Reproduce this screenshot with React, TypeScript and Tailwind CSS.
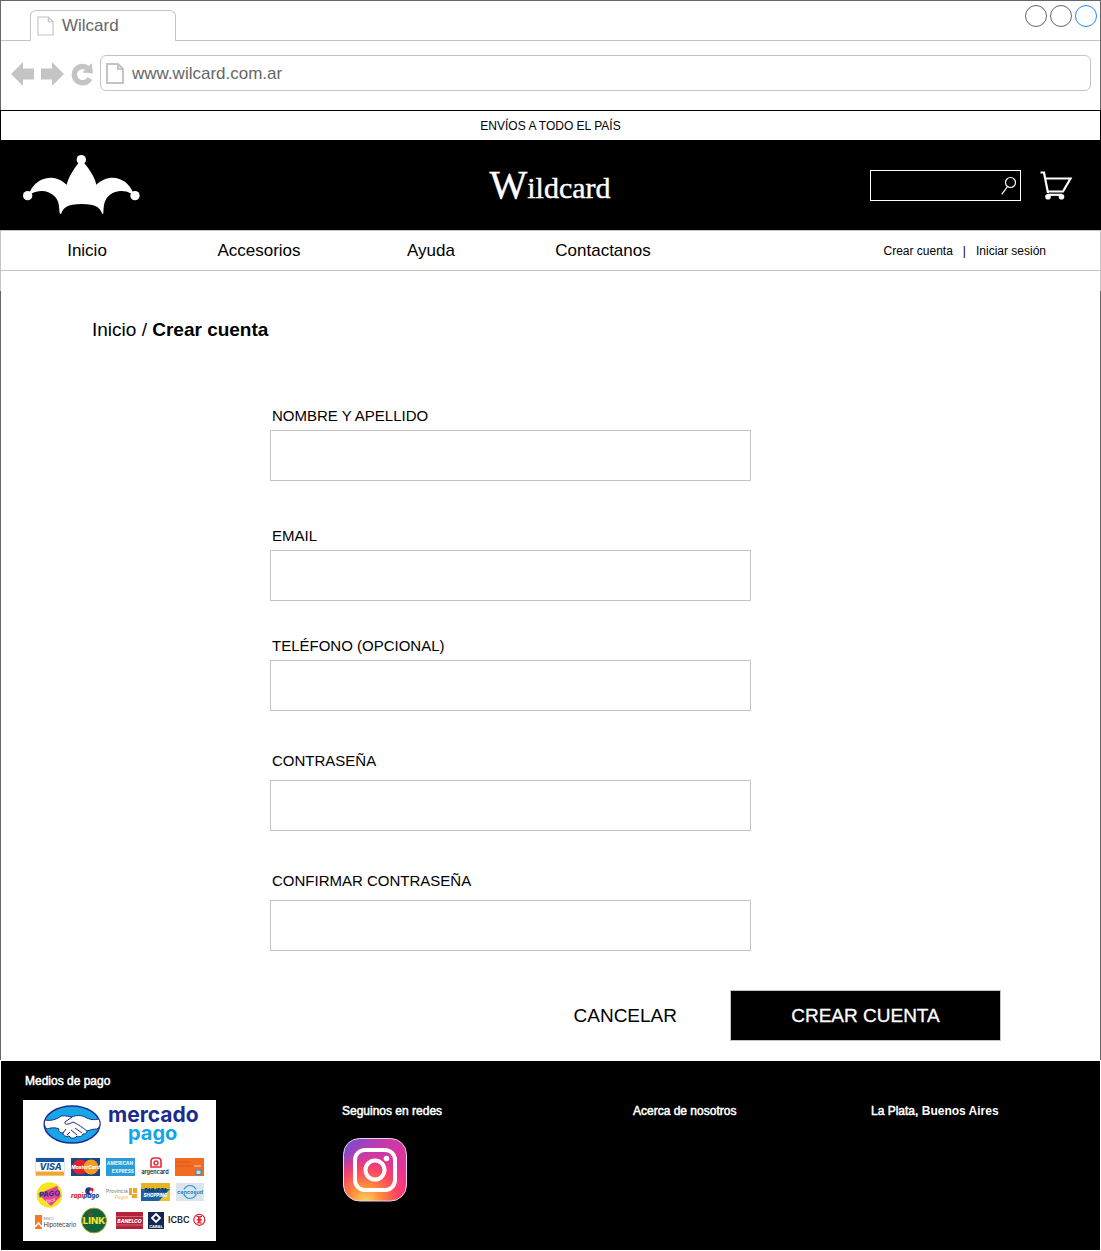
import React from "react";

function PageIcon({ className, stroke }: { className: string; stroke: number }) {
  return (
    <svg viewBox="0 0 18 21" className={className} fill="none" stroke="#c4c4c4" strokeWidth={stroke} aria-hidden="true">
      <path d="M1 1H12L17 6V20H1Z" />
      <path d="M12 1V6H17" />
    </svg>
  );
}

function BrowserChrome() {
  return (
    <div className="border-x border-t border-[#666]">
      <div className="flex h-10 items-stretch">
        <div className="w-[29px] shrink-0 border-b border-[#c4c4c4]" />
        <div className="mt-[9px] flex w-[146px] shrink-0 items-center gap-2 rounded-t-md border-x border-t border-[#c4c4c4] pl-1.5 text-[17px] leading-5 text-[#666]">
          <PageIcon className="h-5 w-[17px]" stroke={1.2} />
          <span>Wilcard</span>
        </div>
        <div className="flex flex-1 justify-end gap-[3px] border-b border-[#c4c4c4] pt-1 pr-[3px]">
          <button type="button" aria-label="Minimizar" className="size-[22px] rounded-full border border-[#666]" />
          <button type="button" aria-label="Maximizar" className="size-[22px] rounded-full border border-[#666]" />
          <button type="button" aria-label="Cerrar" className="size-[22px] rounded-full border border-[#1a8cff]" />
        </div>
      </div>
      <div className="flex h-[69px] items-start pt-3.5 pr-[9px] pl-2.5">
        <div className="flex h-[38px] w-[89px] shrink-0 items-center gap-[7px]">
          <button type="button" aria-label="Atrás">
            <svg viewBox="0 0 23 24" className="h-6 w-[23px]" fill="#c4c4c4"><path d="M0 12L12 0V6.500H23V17.500H12V24Z" /></svg>
          </button>
          <button type="button" aria-label="Adelante">
            <svg viewBox="0 0 23 24" className="h-6 w-[23px]" fill="#c4c4c4"><path d="M23 12L11 0V6.500H0V17.500H11V24Z" /></svg>
          </button>
          <button type="button" aria-label="Recargar">
            <svg viewBox="0 0 22 24" className="h-6 w-[22px]">
              <path d="M18.800 16.500A8.200 8.200 0 1 1 17 6.500" fill="none" stroke="#c4c4c4" strokeWidth="5.500" />
              <path d="M20.500 1L22 11.500L11.500 10.500Z" fill="#c4c4c4" />
            </svg>
          </button>
        </div>
        <label className="flex h-9 flex-1 items-center gap-2 rounded-md border border-[#c4c4c4] pl-[5px]">
          <PageIcon className="h-[21px] w-[18px]" stroke={2} />
          <input
            type="text"
            aria-label="Dirección"
            defaultValue="www.wilcard.com.ar"
            className="flex-1 bg-transparent pt-px text-[17px] leading-5 text-[#666] outline-none"
          />
        </label>
      </div>
    </div>
  );
}

function JesterLogo() {
  return (
    <svg viewBox="69 165 351 180" className="h-[60px] w-[117px]" fill="#fff" role="img" aria-label="Wildcard">
      <circle cx="244" cy="179" r="14" />
      <circle cx="83" cy="287" r="14" />
      <circle cx="405" cy="287" r="14" />
      <path d="M89 277C101 248 126 233 154 233C174 234 188 243 200 254C206 229 221 208 236 188H252C268 208 284 229 289 254C302 241 320 233 338 233C366 234 388 250 399 277L394 281C372 269 347 272 330 284C311 299 311 318 310 340L307 343C301 323 289 312 245 312C201 312 189 323 183 343L179 340C177 320 178 304 165 290C147 270 116 268 94 281Z" />
    </svg>
  );
}

function CartIcon() {
  return (
    <svg viewBox="0 0 33 29" className="h-[29px] w-[33px]" fill="none" stroke="#fff" aria-hidden="true">
      <path d="M0.500 1.500H4L8 22" strokeWidth="2.200" />
      <path d="M5 7.500H30.500L23 20.500H7.500" strokeWidth="2.200" />
      <path d="M8 23.800H22" strokeWidth="2.200" />
      <circle cx="8" cy="25.800" r="2.800" fill="#fff" stroke="none" />
      <circle cx="21.500" cy="25.800" r="2.800" fill="#fff" stroke="none" />
    </svg>
  );
}

function SiteHeader() {
  return (
    <header>
      <p className="flex h-[30px] items-center justify-center border-x border-t border-black text-xs">ENVÍOS A TODO EL PAÍS</p>
      <div className="grid h-[90px] grid-cols-[1fr_auto_1fr] items-center bg-black pr-7 pl-[23px] text-white">
        <a href="#inicio" className="justify-self-start"><JesterLogo /></a>
        <h1 className="pt-0.5 pl-1 font-['Liberation_Serif',serif] text-[30px] leading-10 [-webkit-text-stroke:0.4px_white]">
          <span className="text-[40px]">W</span>ildcard
        </h1>
        <div className="flex items-center gap-[19px] justify-self-end">
          <form role="search" onSubmit={(e) => e.preventDefault()} className="flex h-[31px] w-[151px] items-center border border-white pr-[3px]">
            <input type="search" aria-label="Buscar" className="min-w-0 flex-1 bg-transparent px-2 text-sm outline-none" />
            <button type="submit" aria-label="Buscar">
              <svg viewBox="0 0 16 19" className="h-[19px] w-4" fill="none" stroke="#fff" aria-hidden="true">
                <circle cx="9.500" cy="6.500" r="5" strokeWidth="1.200" />
                <path d="M6.500 10.500L0.800 18.300" strokeWidth="1.200" />
              </svg>
            </button>
          </form>
          <a href="#carrito" aria-label="Carrito"><CartIcon /></a>
        </div>
      </div>
      <nav className="grid h-[41px] grid-cols-[688fr_411fr] items-center border border-[#c4c4c4]">
        <div className="grid grid-cols-4 text-center text-[17px] leading-5">
          <a href="#inicio">Inicio</a>
          <a href="#accesorios">Accesorios</a>
          <a href="#ayuda">Ayuda</a>
          <a href="#contacto">Contactanos</a>
        </div>
        <div className="flex justify-end gap-[10px] pr-[54px] text-xs">
          <a href="#crear">Crear cuenta</a>
          <span>|</span>
          <a href="#sesion">Iniciar sesión</a>
        </div>
      </nav>
      <div className="h-5 border-x border-[#c4c4c4]" />
    </header>
  );
}

type FieldProps = { id: string; label: string; type: string; layout: string };

const fields: FieldProps[] = [
  { id: "nombre", label: "NOMBRE Y APELLIDO", type: "text", layout: "gap-1" },
  { id: "email", label: "EMAIL", type: "email", layout: "mt-[45px] gap-1" },
  { id: "telefono", label: "TELÉFONO (OPCIONAL)", type: "tel", layout: "mt-[35px] gap-1" },
  { id: "clave", label: "CONTRASEÑA", type: "password", layout: "mt-10 gap-[9px]" },
  { id: "confirmar", label: "CONFIRMAR CONTRASEÑA", type: "password", layout: "mt-10 gap-[9px]" },
];

function Field({ id, label, type, layout }: FieldProps) {
  return (
    <div className={`flex max-w-[481px] flex-col ${layout}`}>
      <label htmlFor={id} className="pl-0.5 text-[15px] leading-5">{label}</label>
      <input id={id} type={type} className="h-[51px] w-full border border-[#c4c4c4] px-3 text-[17px] outline-none" />
    </div>
  );
}

function AccountForm() {
  return (
    <main className="border-x border-[#666] pt-[27px] pb-[19px]">
      <p className="pl-[91px] text-[19px] leading-6">
        <a href="#inicio">Inicio</a> / <strong>Crear cuenta</strong>
      </p>
      <form onSubmit={(e) => e.preventDefault()} className="mt-16 mr-[99px] ml-[269px]">
        {fields.map((f) => (
          <Field key={f.id} {...f} />
        ))}
        <div className="mt-[39px] flex justify-end gap-[53px] text-[19px]">
          <button type="button" className="pt-0.5">CANCELAR</button>
          <button type="submit" className="h-[51px] w-[271px] border border-[#c4c4c4] bg-black pt-0.5 text-white [-webkit-text-stroke:0.3px_white]">CREAR CUENTA</button>
        </div>
      </form>
    </main>
  );
}

function PaymentMethods() {
  return (
    <svg viewBox="0 0 193 141" className="h-[141px] w-[193px] bg-white font-[Inter,sans-serif]" role="img" aria-label="Medios de pago aceptados">
      {/* Mercado Pago */}
      <ellipse cx="49" cy="24.500" rx="27.800" ry="18.400" fill="#19a6e6" stroke="#1b2c8a" strokeWidth="1.500" />
      <path d="M22 20C27 21 33 20 38 16C43 15 46 17 49 17C53 15 58 15 62 17C67 20 71 20 76 19C78 24 77 27 74 29C70 29 67 30 64 31C64 33 62 34 60 34C59 37 56 37 54 36C52 39 48 39 46 36C43 37 40 36 40 33C37 33 35 31 36 29C32 27 27 28 24 29C21 26 21 23 22 20Z" fill="#fff" stroke="#1b2c8a" strokeWidth="1" />
      <path d="M49 17L42 22C41 25 45 25 50 22C55 24 60 28 64 31M52 28L59 33M48 30L54 35M40 33L43 29M44 35L47 32" fill="none" stroke="#1b2c8a" strokeWidth="1" />
      <text x="85" y="22" fontSize="21" fontWeight="700" fill="#1b2c8a">mercado</text>
      <text x="105" y="40" fontSize="20" fontWeight="700" fill="#12a5e8">pago</text>

      {/* Visa */}
      <rect x="12.500" y="58" width="29" height="17.500" fill="#fff" stroke="#c9d0dc" strokeWidth="0.600" />
      <rect x="13" y="58" width="28" height="4" fill="#1c559f" />
      <rect x="13" y="71.500" width="28" height="4" fill="#f3a52c" />
      <text x="16.500" y="70.300" fontSize="9" fontWeight="800" fontStyle="italic" fill="#1c559f">VISA</text>
      {/* MasterCard */}
      <rect x="48" y="58" width="29" height="18" fill="#18478e" />
      <circle cx="57" cy="67" r="7.500" fill="#e3232b" />
      <circle cx="68" cy="67" r="7.500" fill="#f59c1d" />
      <text x="62.500" y="69" fontSize="4.800" fontWeight="800" fontStyle="italic" textAnchor="middle" fill="#fff">MasterCard</text>
      {/* American Express */}
      <rect x="83" y="58" width="29" height="18" fill="#2b9cd6" />
      <text x="97" y="65" fontSize="4.800" fontWeight="800" textAnchor="middle" fill="#d5effb">AMERICAN</text>
      <text x="111" y="72.500" fontSize="4.800" fontWeight="800" textAnchor="end" fill="#d5effb">EXPRESS</text>
      {/* Argencard */}
      <path d="M128 67V61.500Q128 58 131.500 58H134.500Q138 58 138 61.500V67Z" fill="none" stroke="#e12b3a" strokeWidth="1.600" />
      <circle cx="133" cy="63" r="2" fill="none" stroke="#e12b3a" strokeWidth="1.400" />
      <text x="132" y="73.500" fontSize="5.500" fontWeight="600" textAnchor="middle" fill="#222">argencard</text>
      {/* Naranja */}
      <rect x="152" y="58" width="29" height="18" fill="#f26b22" />
      <path d="M152 62H168M152 66H170" stroke="#d9531a" strokeWidth="0.800" />
      <rect x="173" y="70" width="5" height="4.500" fill="#b9dff5" stroke="#378cc2" strokeWidth="1" />
      <path d="M171 66H178" stroke="#fbd0b5" strokeWidth="1" />

      {/* Pago Fácil */}
      <circle cx="26.500" cy="95" r="12.800" fill="#f8e51d" />
      <path d="M15 94L34 86L38 96L28 106Z" fill="#ef3f93" />
      <text x="26.500" y="96.500" fontSize="7.500" fontWeight="800" fontStyle="italic" textAnchor="middle" fill="#263c91" transform="rotate(-6 26 95)">PAGO</text>
      <text x="23" y="102.500" fontSize="4.500" fontStyle="italic" fill="#fff" transform="rotate(-15 26 101)">fácil</text>
      {/* Rapipago */}
      <circle cx="66" cy="91" r="3.800" fill="#27377f" />
      <circle cx="68.500" cy="90" r="2.200" fill="#d91f2d" />
      <circle cx="68" cy="92" r="1.500" fill="#fff" />
      <text x="48" y="98" fontSize="6.300" fontWeight="800" fontStyle="italic" fill="#d91f2d">rapi<tspan fill="#27377f">pago</tspan></text>
      {/* Provincia Pagos */}
      <text x="83" y="92.500" fontSize="5" fill="#777">Provincia</text>
      <text x="92" y="98.500" fontSize="4.500" fill="#efb446">Pagos</text>
      <path d="M106 88H109V95H106ZM110 88H114V93H110ZM109 94H114V98H109Z" fill="#efa62d" />
      {/* Tarjeta Shopping */}
      <rect x="118" y="83" width="29" height="18" fill="#1f609e" />
      <path d="M118 83H147V89H118Z" fill="#e5b624" />
      <path d="M147 89V101H136Z" fill="#e9c33b" />
      <text x="132.500" y="91.500" fontSize="5" fontWeight="800" fontStyle="italic" textAnchor="middle" fill="#14376a">TARJETA</text>
      <text x="132.500" y="96.500" fontSize="4.500" fontWeight="800" fontStyle="italic" textAnchor="middle" fill="#fff">SHOPPING</text>
      {/* Cencosud */}
      <rect x="153" y="83" width="28" height="18" fill="#dce5ec" />
      <circle cx="167" cy="92" r="6.500" fill="none" stroke="#2994ce" strokeWidth="1.200" />
      <rect x="154" y="89.500" width="26" height="4.500" fill="#dce5ec" />
      <text x="167" y="93.500" fontSize="5.400" fontWeight="700" textAnchor="middle" fill="#2187c5">cencosud</text>

      {/* Banco Hipotecario */}
      <rect x="12" y="115" width="7" height="14" fill="#f47920" />
      <path d="M12 127L15.500 123L19 127" fill="none" stroke="#fff" strokeWidth="1.500" />
      <text x="20.500" y="120" fontSize="2.800" fill="#777">BANCO</text>
      <text x="20.500" y="126.500" fontSize="6" fill="#333">Hipotecario</text>
      {/* Link */}
      <circle cx="71" cy="120.500" r="12.400" fill="#12633b" stroke="#a6a32c" strokeWidth="1" />
      <text x="71" y="124" fontSize="9.500" fontWeight="800" textAnchor="middle" fill="#f4e529">LINK</text>
      <circle cx="67.500" cy="114.500" r="1" fill="#e12b3a" />
      {/* Banelco */}
      <rect x="93" y="112" width="27" height="17" fill="#b6203a" />
      <path d="M93 116.500H120M93 125H120" stroke="#d3788a" strokeWidth="0.800" />
      <text x="106.500" y="122.800" fontSize="5" fontWeight="800" fontStyle="italic" textAnchor="middle" fill="#fff">BANELCO</text>
      {/* Cabal */}
      <rect x="125" y="112" width="16" height="17" fill="#14274f" />
      <path d="M133 114L137 118L133 122L129 118Z" fill="none" stroke="#fff" strokeWidth="1.800" />
      <text x="133" y="127.500" fontSize="4" fontWeight="700" textAnchor="middle" fill="#fff">CABAL</text>
      {/* ICBC */}
      <text x="145" y="122.800" fontSize="9" fontWeight="600" fill="#222">ICBC</text>
      <circle cx="176.300" cy="119.800" r="5.500" fill="none" stroke="#d8232e" strokeWidth="1.200" />
      <path d="M173.500 116.500H175.600V123H173.500M179 116.500H177V123H179M173.500 119.800H179" fill="none" stroke="#d8232e" strokeWidth="1.200" />
    </svg>
  );
}

function InstagramLogo() {
  return (
    <svg viewBox="0 0 64 64" className="size-16" role="img" aria-label="Instagram">
      <defs>
        <linearGradient id="ig-base" x1="0" y1="0" x2="1" y2="1">
          <stop offset="0" stopColor="#6a4fd8" />
          <stop offset="0.350" stopColor="#c837ab" />
          <stop offset="1" stopColor="#ff2f86" />
        </linearGradient>
        <radialGradient id="ig-glow" cx="0.350" cy="1" r="0.800">
          <stop offset="0" stopColor="#ffd060" />
          <stop offset="0.300" stopColor="#ff8f3a" />
          <stop offset="0.650" stopColor="#ff4a55" stopOpacity="0.800" />
          <stop offset="1" stopColor="#ff2f86" stopOpacity="0" />
        </radialGradient>
      </defs>
      <rect x="0.500" y="0.500" width="63" height="62.500" rx="16" fill="url(#ig-base)" />
      <rect x="0.500" y="0.500" width="63" height="62.500" rx="16" fill="url(#ig-glow)" stroke="#e6d5e6" strokeWidth="1" />
      <rect x="12" y="12" width="40" height="40" rx="10" fill="none" stroke="#fff" strokeWidth="4" />
      <circle cx="32" cy="32" r="9.500" fill="none" stroke="#fff" strokeWidth="4" />
      <circle cx="43.500" cy="20.500" r="2.800" fill="#fff" />
    </svg>
  );
}

function SiteFooter() {
  return (
    <footer className="grid grid-cols-[319fr_291fr_238fr_229fr] border border-white bg-black pt-3 pb-[9px] pl-[22px] text-xs text-white">
      <section>
        <h2 className="pl-0.5 [-webkit-text-stroke:0.5px_white]">Medios de pago</h2>
        <div className="mt-[11px]"><PaymentMethods /></div>
      </section>
      <section className="pt-[30px]">
        <h2 className="[-webkit-text-stroke:0.5px_white]">Seguinos en redes</h2>
        <a href="#instagram" className="mt-[19px] ml-px inline-block"><InstagramLogo /></a>
      </section>
      <section className="pt-[30px]">
        <a href="#nosotros" className="[-webkit-text-stroke:0.5px_white]">Acerca de nosotros</a>
      </section>
      <section className="pt-[30px]">
        <p><span className="[-webkit-text-stroke:0.5px_white]">La Plata,</span> <strong>Buenos Aires</strong></p>
      </section>
    </footer>
  );
}

export default function App() {
  return (
    <div className="bg-white font-['Liberation_Sans',Arial,sans-serif] text-black">
      <BrowserChrome />
      <SiteHeader />
      <AccountForm />
      <SiteFooter />
    </div>
  );
}
